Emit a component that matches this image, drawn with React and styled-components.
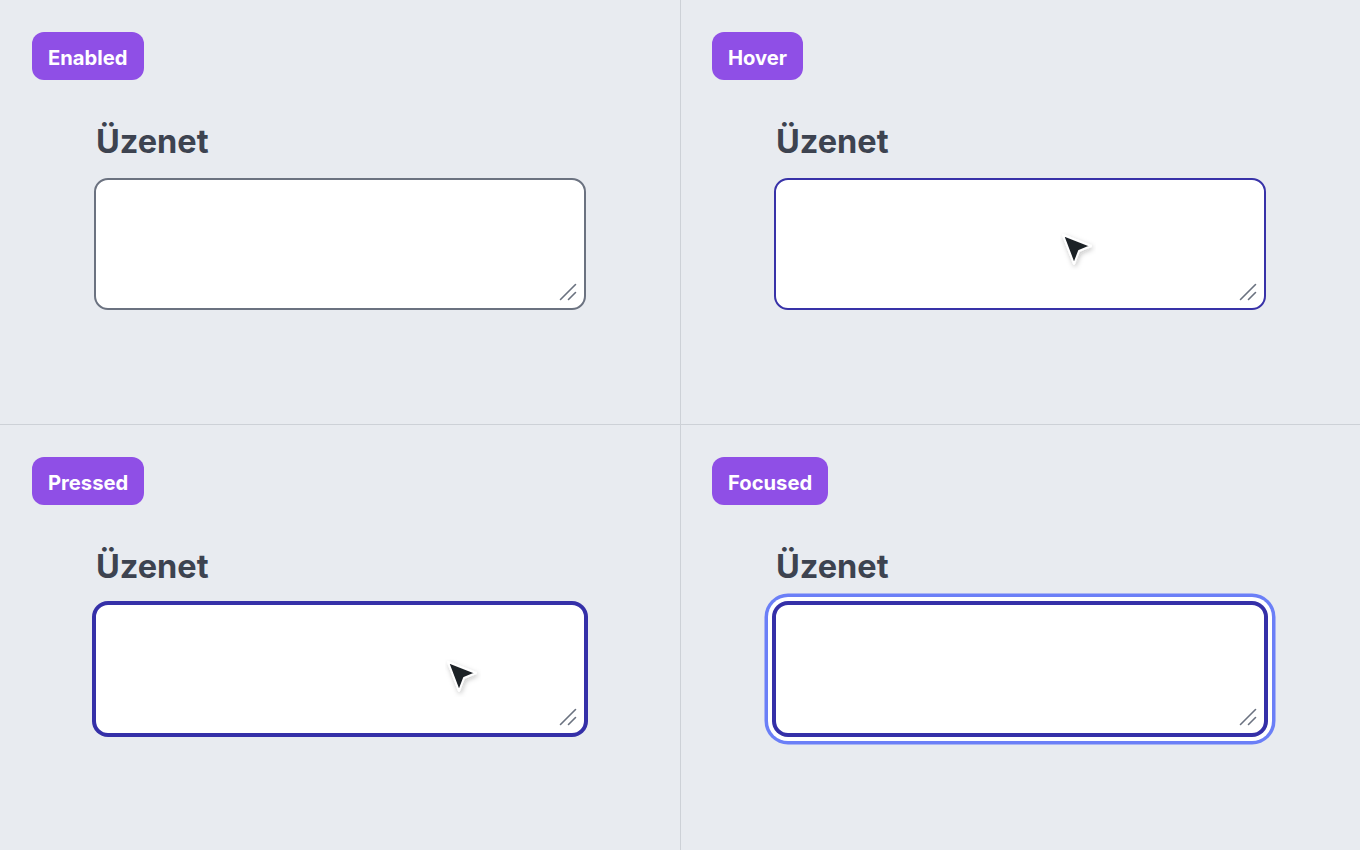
import React from 'react';
import styled, { createGlobalStyle, css } from 'styled-components';

const GlobalStyle = createGlobalStyle`
  html, body {
    margin: 0;
    padding: 0;
    background: #e8ebf0;
    font-family: Inter, "Noto Sans", sans-serif;
  }
`;

const states = [
  { key: 'enabled', label: 'Enabled' },
  { key: 'hover', label: 'Hover', cursor: { left: 379, top: 232 } },
  { key: 'pressed', label: 'Pressed', cursor: { left: 445, top: 234 } },
  { key: 'focused', label: 'Focused' },
];

const Arrow = () => (
  <svg width="36" height="38" viewBox="0 0 36 38">
    <defs>
      <filter id="sh" x="-40%" y="-40%" width="180%" height="180%">
        <feDropShadow dx="1" dy="2" stdDeviation="2.4" floodColor="#1d2127" floodOpacity="0.25" />
      </filter>
    </defs>
    <path
      d="M3 3 L31 14 L19 19 L14 32 Z"
      fill="#1d2127"
      stroke="#fff"
      strokeWidth="2"
      strokeLinejoin="round"
      filter="url(#sh)"
    />
  </svg>
);

const Handle = () => (
  <svg width="18" height="18" viewBox="0 0 18 18">
    <line x1="1.5" y1="16.5" x2="16.5" y2="1.5" stroke="#6b7280" strokeWidth="1.6" strokeLinecap="round" />
    <line x1="9.5" y1="16.5" x2="16.5" y2="9.5" stroke="#6b7280" strokeWidth="1.6" strokeLinecap="round" />
  </svg>
);

const Cell = ({ state, index }) => (
  <Panel $right={index % 2 === 1} $top={index < 2}>
    <Badge>{state.label}</Badge>
    <Field>
      <Label>Üzenet</Label>
      <BoxWrap>
        <Box $state={state.key} />
        <HandleSpot>
          <Handle />
        </HandleSpot>
      </BoxWrap>
    </Field>
    {state.cursor && (
      <Cursor style={{ left: state.cursor.left, top: state.cursor.top }}>
        <Arrow />
      </Cursor>
    )}
  </Panel>
);

export default function App() {
  return (
    <>
      <GlobalStyle />
      <Grid>
        {states.map((s, i) => (
          <Cell key={s.key} state={s} index={i} />
        ))}
      </Grid>
    </>
  );
}

const Grid = styled.div`
  display: grid;
  grid-template-columns: 680px 680px;
  grid-template-rows: 425px 425px;
  width: 1360px;
  height: 850px;
  overflow: hidden;
`;

const Panel = styled.section`
  position: relative;
  box-sizing: border-box;
  padding: 32px;
  ${p => p.$right && css`
    border-left: 1px solid #cdd1d7;
    padding-left: 31px;
  `}
  ${p => p.$top && css`
    border-bottom: 1px solid #cdd1d7;
  `}
`;

const Badge = styled.div`
  display: inline-flex;
  align-items: center;
  height: 48px;
  padding: 2px 16px 0;
  border-radius: 12px;
  background: #8f4fe6;
  color: #fff;
  font-size: 20.2px;
  font-weight: 700;
  box-sizing: border-box;
`;

const Field = styled.div`
  display: flex;
  flex-direction: column;
  margin: 43px 0 0 62px;
  width: 492px;
`;

const Label = styled.div`
  font-size: 32.5px;
  font-weight: 650;
  line-height: 38px;
  color: #3d4350;
  padding-left: 2px;
  margin-bottom: 17px;
`;

const BoxWrap = styled.div`
  position: relative;
  width: 492px;
  height: 132px;
`;

const Box = styled.div`
  box-sizing: border-box;
  width: 100%;
  height: 100%;
  background: #fff;
  border-radius: 14px;
  border: 2px solid #6b7280;
  ${p => p.$state === 'hover' && css`
    border-color: #3832a8;
  `}
  ${p => p.$state === 'pressed' && css`
    border-color: #3530a8;
    box-shadow: 0 0 0 2px #3530a8;
  `}
  ${p => p.$state === 'focused' && css`
    border-color: #3530a8;
    box-shadow: 0 0 0 2px #3530a8, 0 0 0 6px #ffffff, 0 0 0 9.5px #6b7ff7;
  `}
`;

const HandleSpot = styled.div`
  position: absolute;
  right: 9px;
  bottom: 9px;
  width: 18px;
  height: 18px;
  line-height: 0;
`;

const Cursor = styled.div`
  position: absolute;
  line-height: 0;
  pointer-events: none;
`;
